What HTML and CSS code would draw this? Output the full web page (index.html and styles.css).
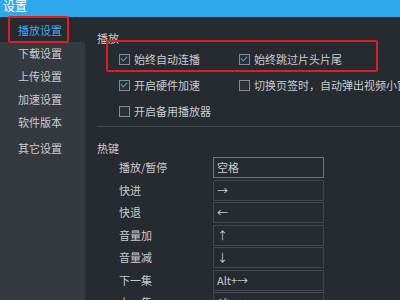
FILE: index.html
```html
<!DOCTYPE html>
<html lang="zh-CN">
<head>
  <meta charset="UTF-8">
  <title>设置</title>
  <link rel="stylesheet" href="styles.css">
</head>
<body>
  <div class="titlebar">设置</div>

  <div class="main">
    <div class="sidebar">
      <div class="nav-item active">播放设置</div>
      <div class="nav-item">下载设置</div>
      <div class="nav-item">上传设置</div>
      <div class="nav-item">加速设置</div>
      <div class="nav-item">软件版本</div>
      <div class="nav-item gap">其它设置</div>
    </div>

    <div class="content">
      <div class="section-title">播放</div>
      <div class="check-grid">
        <label class="check"><span class="box checked"></span>始终自动连播</label>
        <label class="check"><span class="box checked"></span>始终跳过片头片尾</label>
        <label class="check"><span class="box checked"></span>开启硬件加速</label>
        <label class="check"><span class="box"></span>切换页签时，自动弹出视频小窗</label>
        <label class="check"><span class="box"></span>开启备用播放器</label>
      </div>

      <div class="divider"></div>

      <div class="section-title hot">热键</div>
      <div class="hotkeys">
        <div class="hk-label">播放/暂停</div><div class="hk-input focus">空格</div>
        <div class="hk-label">快进</div><div class="hk-input">→</div>
        <div class="hk-label">快退</div><div class="hk-input">←</div>
        <div class="hk-label">音量加</div><div class="hk-input">↑</div>
        <div class="hk-label">音量减</div><div class="hk-input">↓</div>
        <div class="hk-label">下一集</div><div class="hk-input">Alt+→</div>
        <div class="hk-label">上一集</div><div class="hk-input">Alt+←</div>
      </div>
    </div>
  </div>

  <!-- annotation frames -->
  <div class="mark mark-nav"></div>
  <div class="mark mark-opts"></div>
</body>
</html>
```

FILE: styles.css
```css
body {
  margin: 0;
  width: 400px;
  height: 300px;
  overflow: hidden;
  position: relative;
  font-family: "Noto Sans CJK SC", "Noto Sans", sans-serif;
  font-size: 11px;
  color: #c9cbcf;
  background-color: #262a31;
}

.titlebar {
  height: 17px;
  line-height: 11px;
  padding-left: 3px;
  font-size: 12px;
  color: #fff;
  background-color: #30a9ea;
}

.main {
  display: flex;
  height: 283px;
}

.sidebar {
  width: 85px;
  flex-shrink: 0;
  background-color: #353940;
}

.nav-item {
  line-height: 23px;
  padding-left: 18px;
}

.nav-item.active {
  padding-top: 2px;
  color: #3fa9ea;
  background-color: #262a31;
}

.nav-item.gap {
  margin-top: 3px;
}

.content {
  flex: 1;
  padding-left: 12px;
  padding-top: 14px;
  white-space: nowrap;
  overflow: hidden;
}

.section-title {
  line-height: 15px;
}

.section-title.hot {
  margin-top: 14px;
}

.check-grid {
  display: grid;
  grid-template-columns: 120px 1fr;
  grid-auto-rows: 26px;
  padding-left: 22px;
}

.check {
  display: flex;
  align-items: center;
  gap: 4px;
}

.box {
  width: 9px;
  height: 9px;
  border: 1px solid #868a91;
  background-color: #2b2f36;
  position: relative;
}

.box.checked::after {
  content: "";
  position: absolute;
  left: 2px;
  top: 0px;
  width: 3px;
  height: 5px;
  border-right: 1.5px solid #33a6ee;
  border-bottom: 1.5px solid #33a6ee;
  transform: rotate(45deg);
}

.divider {
  margin-top: 2px;
  height: 1px;
  background-color: #43474e;
}

.hotkeys {
  display: grid;
  grid-template-columns: 94px 111px;
  grid-auto-rows: 21px;
  row-gap: 1.5px;
  margin-top: 1px;
  padding-left: 22px;
}

.hk-label {
  line-height: 21px;
}

.hk-input {
  box-sizing: border-box;
  border: 1px solid #41454d;
  padding-left: 3px;
  line-height: 19px;
  color: #c9cbcf;
}

.hk-input.focus {
  border-color: #1a90cc;
}

.mark {
  position: absolute;
  border: 2.5px solid #e51b22;
  border-radius: 2px;
}

.mark-nav {
  left: 8px;
  top: 16px;
  width: 57px;
  height: 23px;
}

.mark-opts {
  left: 106px;
  top: 40px;
  width: 268px;
  height: 28px;
}
```
